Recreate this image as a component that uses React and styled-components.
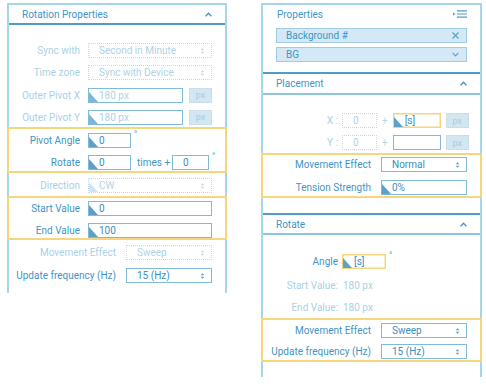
import React from 'react'
import styled, { createGlobalStyle } from 'styled-components'

const BLUE = '#3f95c5'
const PALE = '#a9d1e5'
const FRAME = '#a6d6ea'
const DARK_LINE = '#4f9dc6'
const LIGHT_LINE = '#8fc6df'
const YELLOW = '#f6d67c'

const GlobalStyle = createGlobalStyle`
  body {
    margin: 0;
    background: #ffffff;
    font-family: Roboto, "Liberation Sans", sans-serif;
  }
`

const Page = styled.div`
  display: flex;
  align-items: flex-start;
  gap: 34px;
  padding: 3px 0 0 7px;
`

const Panel = styled.section`
  --pr: 13px;
  width: ${p => p.$w}px;
  box-sizing: border-box;
  border: 2px solid ${FRAME};
  border-bottom: none;
  display: flex;
  flex-direction: column;
`

const Section = styled.div`
  display: flex;
  flex-direction: column;
  border-bottom: ${p => (p.$line ? `2px solid ${p.$line}` : 'none')};
  padding-bottom: ${p => p.$pb || 0}px;
`

const Header = styled.header`
  display: flex;
  align-items: center;
  justify-content: space-between;
  height: ${p => p.$h || 18}px;
  padding: 0 13px 0 ${p => p.$pl || 13}px;
  border-bottom: ${p => (p.$line ? `2px solid ${p.$line}` : 'none')};
  font-size: 10px;
  color: ${BLUE};
`

const Body = styled.div`
  display: flex;
  flex-direction: column;
  padding: ${p => p.$pt}px 0 ${p => p.$pb}px;
`

// a run of rows; a highlighted one gets the yellow frame over the panel edges
const Group = styled.div`
  display: flex;
  flex-direction: column;
  gap: ${p => p.$gap || 7}px;
  margin: ${p => p.$mt || 0}px -2px 0;
  padding: ${p => p.$pt || 0}px 0 ${p => p.$pb || 0}px;
  border-style: solid;
  border-width: ${p => (p.$hl ? '2px' : '0 2px')};
  border-color: ${p => (p.$hl ? YELLOW : 'transparent')};
`

const Row = styled.div`
  display: grid;
  grid-template-columns: ${p => p.$lw}px 1fr;
  column-gap: ${p => p.$gap}px;
  align-items: center;
  height: 15px;
  padding-right: var(--pr);
`

const Label = styled.span`
  text-align: right;
  white-space: nowrap;
  font-size: 10px;
  color: ${p => (p.$off ? PALE : BLUE)};
`

const Controls = styled.div`
  display: flex;
  align-items: center;
  min-width: 0;
`

const Field = styled.div`
  position: relative;
  box-sizing: border-box;
  display: flex;
  align-items: center;
  justify-content: space-between;
  height: 15px;
  width: ${p => (p.$w ? `${p.$w}px` : 'auto')};
  flex: ${p => (p.$w ? 'none' : 1)};
  padding: 0 6px 0 ${p => p.$pl || 10}px;
  border: 1px ${p => (p.$off ? 'dotted' : 'solid')}
    ${p => (p.$hl ? YELLOW : p.$off ? '#bcdcec' : '#7fbad8')};
  ${p => p.$hl && `box-shadow: inset 0 0 0 0.5px ${YELLOW};`}
  font-size: 10px;
  color: ${p => (p.$dim ? '#aed3e6' : '#3b8ec0')};
  white-space: nowrap;

  &::before {
    content: '';
    display: ${p => (p.$tri ? 'block' : 'none')};
    position: absolute;
    left: 0;
    bottom: 0;
    width: 0;
    height: 0;
    border-bottom: 10px solid ${p => (p.$tri === 'faint' ? '#cfe5f1' : p.$dim ? '#7fb5d7' : '#5e9fca')};
    border-right: 9px solid transparent;
  }
`

const PxBox = styled.div`
  box-sizing: border-box;
  flex: none;
  width: 23px;
  height: 15px;
  margin-left: ${p => p.$ml || 6}px;
  display: flex;
  align-items: center;
  justify-content: center;
  background: #d3e7f3;
  border: 1px dotted #b7d8ea;
  font-size: 9px;
  color: #a7cde1;
`

const Between = styled.span`
  flex: none;
  font-size: 10px;
  color: ${p => (p.$off ? '#b5d7e8' : BLUE)};
  margin: 0 ${p => p.$mr || 3}px 0 ${p => p.$ml || 6}px;
`

const Degree = styled.span`
  width: 0;
  overflow: visible;
  align-self: flex-start;
  margin: -4px 0 0 3px;
  font-size: 9px;
  color: ${BLUE};
`

const Value = styled.span`
  font-size: 10px;
  color: ${PALE};
`

const Tag = styled.div`
  box-sizing: border-box;
  display: flex;
  align-items: center;
  justify-content: space-between;
  height: 15px;
  margin: ${p => p.$mt}px 13px 0;
  padding: 0 7px 0 9px;
  background: #d4e9f5;
  border: 1px solid #a1cde3;
  font-size: 10px;
  color: ${BLUE};
`

const Chevron = () => (
  <svg width="7" height="5" viewBox="0 0 7 5">
    <path d="M0.6 4.2 L3.5 1.2 L6.4 4.2" fill="none" stroke={BLUE} strokeWidth="1.3" />
  </svg>
)

const ChevronDown = () => (
  <svg width="7" height="5" viewBox="0 0 7 5">
    <path d="M0.6 0.9 L3.5 3.9 L6.4 0.9" fill="none" stroke="#5da3cc" strokeWidth="1.2" />
  </svg>
)

const Cross = () => (
  <svg width="7" height="7" viewBox="0 0 7 7">
    <path d="M0.5 0.5 L6.5 6.5 M6.5 0.5 L0.5 6.5" fill="none" stroke="#5da3cc" strokeWidth="1.3" />
  </svg>
)

const ListIcon = () => (
  <svg width="14" height="8" viewBox="0 0 14 8">
    <path d="M0 2.5 L2.5 4 L0 5.5Z" fill="#4f9dc6" />
    <path d="M4 0.8 H14 M4 4 H14 M4 7.2 H14" stroke="#4f9dc6" strokeWidth="1.2" />
  </svg>
)

const Spin = ({ off }) => (
  <svg width="5" height="8" viewBox="0 0 5 8">
    <path d="M0.6 3.3 L2.5 1.2 L4.4 3.3Z M0.6 4.7 L2.5 6.8 L4.4 4.7Z" fill={off ? '#bcdbeb' : '#5b9fca'} />
  </svg>
)

const Select = ({ children, off, tri }) => (
  <Field $off={off} $dim={off} $tri={tri}>
    <span>{children}</span>
    <Spin off={off} />
  </Field>
)

function RotationPanel() {
  return (
    <Panel $w={220}>
      <Header $line={DARK_LINE}>
        <span>Rotation Properties</span>
        <Chevron />
      </Header>
      <Body $pt={18} $pb={10}>
        <Group $gap={7.3}>
          <Row $lw={71} $gap={8}>
            <Label $off>Sync with</Label>
            <Select off>Second in Minute</Select>
          </Row>
          <Row $lw={71} $gap={8}>
            <Label $off>Time zone</Label>
            <Select off>Sync with Device</Select>
          </Row>
          <Row $lw={71} $gap={8}>
            <Label $off>Outer Pivot X</Label>
            <Controls>
              <Field $dim $tri>180 px</Field>
              <PxBox>px</PxBox>
            </Controls>
          </Row>
          <Row $lw={71} $gap={8}>
            <Label $off>Outer Pivot Y</Label>
            <Controls>
              <Field $dim $tri>180 px</Field>
              <PxBox>px</PxBox>
            </Controls>
          </Row>
        </Group>
        <Group $hl $mt={2} $pt={4} $pb={1} $gap={7.3}>
          <Row $lw={71} $gap={8}>
            <Label>Pivot Angle</Label>
            <Controls>
              <Field $w={43} $tri>0</Field>
              <Degree>°</Degree>
            </Controls>
          </Row>
          <Row $lw={71} $gap={8}>
            <Label>Rotate</Label>
            <Controls>
              <Field $w={43} $tri>0</Field>
              <Between $ml={6} $mr={2}>times +</Between>
              <Field>0</Field>
              <Degree>°</Degree>
            </Controls>
          </Row>
        </Group>
        <Group $mt={5}>
          <Row $lw={71} $gap={8}>
            <Label $off>Direction</Label>
            <Select off tri="faint">CW</Select>
          </Row>
        </Group>
        <Group $hl $mt={3} $pt={3} $gap={7.3}>
          <Row $lw={71} $gap={8}>
            <Label>Start Value</Label>
            <Field $tri>0</Field>
          </Row>
          <Row $lw={71} $gap={8}>
            <Label>End Value</Label>
            <Field $tri>100</Field>
          </Row>
        </Group>
        <Group $mt={5} $gap={8}>
          <Row $lw={107} $gap={10}>
            <Label $off>Movement Effect</Label>
            <Select off>Sweep</Select>
          </Row>
          <Row $lw={107} $gap={10}>
            <Label>Update frequency (Hz)</Label>
            <Select>15 (Hz)</Select>
          </Row>
        </Group>
      </Body>
    </Panel>
  )
}

function PropertiesPanel() {
  return (
    <Panel $w={221}>
      <Section $line={DARK_LINE} $pb={10}>
        <Header $pl={14}>
          <span>Properties</span>
          <ListIcon />
        </Header>
        <Tag $mt={5}>
          <span>Background #</span>
          <Cross />
        </Tag>
        <Tag $mt={4}>
          <span>BG</span>
          <ChevronDown />
        </Tag>
      </Section>

      <Section $line={DARK_LINE}>
        <Header $h={19} $line={LIGHT_LINE}>
          <span>Placement</span>
          <Chevron />
        </Header>
        <Body $pt={18} $pb={15}>
          <Group $gap={7}>
            <Row $lw={75} $gap={4}>
              <Label $off>X :</Label>
              <Controls>
                <Field $w={35} $off $dim>0</Field>
                <Between $off $ml={5} $mr={5}>+</Between>
                <Field $w={48} $hl $tri $pl={11}>[s]</Field>
                <PxBox $ml={5}>px</PxBox>
              </Controls>
            </Row>
            <Row $lw={75} $gap={4}>
              <Label $off>Y :</Label>
              <Controls>
                <Field $w={35} $off $dim>0</Field>
                <Between $off $ml={5} $mr={5}>+</Between>
                <Field $w={48} />
                <PxBox $ml={5}>px</PxBox>
              </Controls>
            </Row>
          </Group>
          <Group $hl $mt={3} $pt={2} $pb={1} $gap={8}>
            <Row $lw={108} $gap={10}>
              <Label>Movement Effect</Label>
              <Select>Normal</Select>
            </Row>
            <Row $lw={108} $gap={10}>
              <Label>Tension Strength</Label>
              <Field $tri>0%</Field>
            </Row>
          </Group>
        </Body>
      </Section>

      <Section>
        <Header $line={LIGHT_LINE}>
          <span>Rotate</span>
          <Chevron />
        </Header>
        <Body $pt={19} $pb={15}>
          <Group $gap={9}>
            <Row $lw={75} $gap={4}>
              <Label>Angle</Label>
              <Controls>
                <Field $w={44} $hl $tri $pl={11}>[s]</Field>
                <Degree>°</Degree>
              </Controls>
            </Row>
            <Row $lw={75} $gap={5}>
              <Label $off>Start Value:</Label>
              <Value>180 px</Value>
            </Row>
          </Group>
          <Group $mt={7}>
            <Row $lw={75} $gap={5}>
              <Label $off>End Value:</Label>
              <Value>180 px</Value>
            </Row>
          </Group>
          <Group $hl $mt={3} $pt={3} $pb={1} $gap={6}>
            <Row $lw={108} $gap={10}>
              <Label>Movement Effect</Label>
              <Select>Sweep</Select>
            </Row>
            <Row $lw={108} $gap={10}>
              <Label>Update frequency (Hz)</Label>
              <Select>15 (Hz)</Select>
            </Row>
          </Group>
        </Body>
      </Section>
    </Panel>
  )
}

export default function App() {
  return (
    <>
      <GlobalStyle />
      <Page>
        <RotationPanel />
        <PropertiesPanel />
      </Page>
    </>
  )
}
